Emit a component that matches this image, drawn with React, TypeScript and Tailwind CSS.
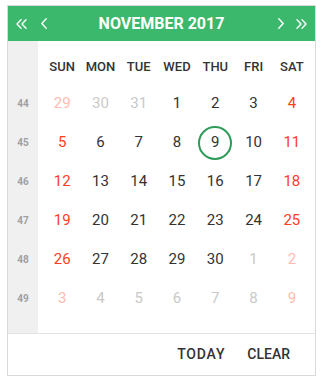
import React from 'react'

const WEEKDAYS = ['SUN', 'MON', 'TUE', 'WED', 'THU', 'FRI', 'SAT']

type Day = { n: number; inMonth: boolean }

const WEEKS: { week: number; days: Day[] }[] = (() => {
  const out: { week: number; days: Day[] }[] = []
  // Nov 2017 starts Wednesday; grid starts Sun Oct 29
  const cells: Day[] = [29, 30, 31].map((n) => ({ n, inMonth: false }))
  for (let i = 1; i <= 30; i++) cells.push({ n: i, inMonth: true })
  let next = 1
  while (cells.length < 42) cells.push({ n: next++, inMonth: false })
  for (let w = 0; w < 6; w++) out.push({ week: 44 + w, days: cells.slice(w * 7, w * 7 + 7) })
  return out
})()

function DoubleChevron({ dir }: { dir: 'left' | 'right' }) {
  return (
    <svg width="11" height="10" viewBox="0 0 11 10" fill="none" stroke="white" strokeWidth="1.4" strokeLinecap="round" strokeLinejoin="round">
      {dir === 'left' ? (
        <>
          <path d="M5 0.8 1 5l4 4.2" />
          <path d="M10 0.8 6 5l4 4.2" />
        </>
      ) : (
        <>
          <path d="M1 0.8 5 5 1 9.2" />
          <path d="M6 0.8 10 5 6 9.2" />
        </>
      )}
    </svg>
  )
}

function Chevron({ dir }: { dir: 'left' | 'right' }) {
  return (
    <svg width="6" height="11" viewBox="0 0 6 11" fill="none" stroke="white" strokeWidth="1.4" strokeLinecap="round" strokeLinejoin="round">
      {dir === 'left' ? <path d="M5.2 0.8 0.8 5.5l4.4 4.7" /> : <path d="M0.8 0.8 5.2 5.5l-4.4 4.7" />}
    </svg>
  )
}

function dayColor(d: Day, col: number) {
  const weekend = col === 0 || col === 6
  if (d.inMonth) return weekend ? 'text-[#ff3d1f]' : 'text-[#333333]'
  return weekend ? 'text-[#ffbcae]' : 'text-[#c9c9c9]'
}

export default function App() {
  return (
    <div className="min-h-screen bg-white pl-[7px] pt-[5px]" style={{ fontFamily: 'Roboto, "Liberation Sans", sans-serif' }}>
      <div className="w-[309px] border border-[#d9d9d9] bg-white">
        {/* header */}
        <div className="flex h-[35px] items-center bg-[#3bb86b] text-white">
          <div className="flex w-[40px] items-center gap-[14px] pl-[8px]">
            <DoubleChevron dir="left" />
            <Chevron dir="left" />
          </div>
          <div className="flex-1 text-center text-[16px] font-bold">NOVEMBER 2017</div>
          <div className="flex w-[40px] items-center justify-end gap-[12px] pr-[8px]">
            <Chevron dir="right" />
            <DoubleChevron dir="right" />
          </div>
        </div>

        {/* body */}
        <div className="flex border-b border-[#e3e3e3]">
          <div className="w-[30px] bg-[#f0f0f0] pt-[8px] pb-[15px]">
            <div className="h-[35px]" />
            {WEEKS.map((w) => (
              <div key={w.week} className="flex h-[39px] items-center justify-center text-[10px] font-bold text-[#a0a0a0]">
                {w.week}
              </div>
            ))}
          </div>
          <div className="flex-1 pl-[5px] pr-[4px] pt-[8px] pb-[15px]">
            <div className="grid h-[35px] grid-cols-7 items-center">
              {WEEKDAYS.map((d) => (
                <div key={d} className="text-center text-[13px] font-medium text-[#333333]">
                  {d}
                </div>
              ))}
            </div>
            {WEEKS.map((w) => (
              <div key={w.week} className="grid h-[39px] grid-cols-7 items-center">
                {w.days.map((d, i) => {
                  const today = d.inMonth && d.n === 9
                  return (
                    <div key={i} className="flex items-center justify-center">
                      <span
                        className={`flex h-[34px] w-[34px] items-center justify-center rounded-full text-[15px] ${dayColor(d, i)} ${
                          today ? 'border-[2.5px] border-[#2e9b59]' : ''
                        }`}
                      >
                        {d.n}
                      </span>
                    </div>
                  )
                })}
              </div>
            ))}
          </div>
        </div>

        {/* footer */}
        <div className="flex h-[41px] items-center justify-end gap-[22px] pr-[25px] text-[14px] font-medium text-[#333333]">
          <span className="tracking-[0.8px]">TODAY</span>
          <span>CLEAR</span>
        </div>
      </div>
    </div>
  )
}
